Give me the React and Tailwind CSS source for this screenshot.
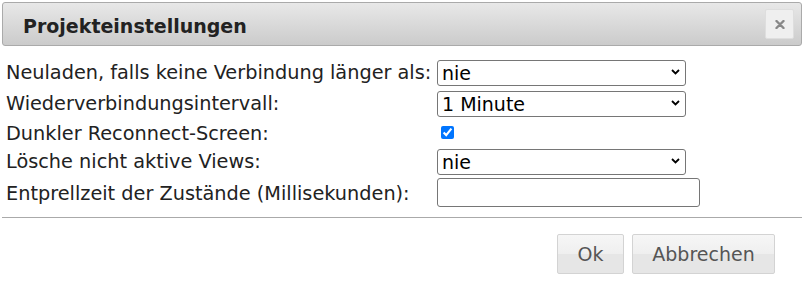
import { useState } from 'react';

const SelectBox = ({ value, options, className }) => {
  const [current, setCurrent] = useState(value);
  return (
    <div className={`relative w-[249px] h-[26px] ${className || ''}`}>
      <select
        value={current}
        onChange={(e) => setCurrent(e.target.value)}
        className="appearance-none w-full h-full border border-[#767676] rounded-[3px] bg-white pl-[4px] pr-[24px] text-[19px] leading-[22px] text-black outline-none"
      >
        {options.map((o) => (
          <option key={o} value={o}>{o}</option>
        ))}
      </select>
      {/* chevron */}
      <svg
        className="absolute right-[6px] top-[10px] pointer-events-none"
        width="9"
        height="6"
        viewBox="0 0 9 6"
      >
        <path d="M1 1 L4.5 4.5 L8 1" fill="none" stroke="#000" strokeWidth="1.8" />
      </svg>
    </div>
  );
};

const Row = ({ label, height, children }) => (
  <div className={`flex items-center ${height}`}>
    <div className="w-[431px] shrink-0 pt-[3px] text-[19.3px] text-[#222] whitespace-nowrap">{label}</div>
    <div className="flex items-center">{children}</div>
  </div>
);

const App = () => {
  const [dark, setDark] = useState(true);

  return (
    <div className="w-[806px] h-[297px] bg-white overflow-hidden font-['DejaVu_Sans',sans-serif] text-[19px]">
      {/* Title bar */}
      <div className="ml-[2px] mt-[2px] w-[800px] h-[44px] border border-[#aaa] rounded-[3px] bg-[linear-gradient(to_bottom,#e8e8e8,#cbcbcb)] flex items-center justify-between pl-[20px] pr-[7px]">
        <span className="font-bold text-[#222] pt-[4px]">Projekteinstellungen</span>
        <button className="w-[29px] h-[30px] border border-[#dedede] rounded-[2px] bg-[#efefef] flex items-center justify-center">
          <svg width="10" height="9" viewBox="0 0 10 9">
            <path d="M1.5 1 L8.5 8 M8.5 1 L1.5 8" stroke="#888" strokeWidth="2.4" strokeLinecap="round" />
          </svg>
        </button>
      </div>

      {/* Settings */}
      <div className="pl-[6px] pt-[11px]">
        <Row label="Neuladen, falls keine Verbindung länger als:" height="h-[30px]">
          <SelectBox value="nie" options={['nie', '1 Minute', '5 Minuten', '10 Minuten']} />
        </Row>
        <Row label="Wiederverbindungsintervall:" height="h-[31px] pt-[1px]">
          <SelectBox value="1 Minute" options={['5 Sekunden', '30 Sekunden', '1 Minute', '5 Minuten']} />
        </Row>
        <Row label="Dunkler Reconnect-Screen:" height="h-[29px]">
          <input
            type="checkbox"
            checked={dark}
            onChange={(e) => setDark(e.target.checked)}
            className="ml-[4px] w-[13px] h-[13px] accent-[#0075ff]"
          />
        </Row>
        <Row label="Lösche nicht aktive Views:" height="h-[28px]">
          <SelectBox value="nie" options={['nie', '1 Stunde', '1 Tag']} />
        </Row>
        <Row label="Entprellzeit der Zustände (Millisekunden):" height="h-[35px]">
          <input
            type="text"
            className="w-[263px] h-[29px] border border-[#767676] rounded-[3px] bg-white px-[4px] outline-none"
          />
        </Row>
      </div>

      {/* Divider */}
      <div className="ml-[2px] mt-[7px] w-[800px] border-t border-[#aaa]" />

      {/* Buttons */}
      <div className="w-[802px] flex justify-end gap-[8px] pt-[16px] pr-[27px]">
        <button className="w-[67px] h-[40px] border border-[#d3d3d3] rounded-[2px] bg-[linear-gradient(to_bottom,#f6f6f6_0%,#efefef_50%,#e6e6e6_50%,#e6e6e6_100%)] text-[#555]">
          Ok
        </button>
        <button className="w-[143px] h-[40px] border border-[#d3d3d3] rounded-[2px] bg-[linear-gradient(to_bottom,#f6f6f6_0%,#efefef_50%,#e6e6e6_50%,#e6e6e6_100%)] text-[#555]">
          Abbrechen
        </button>
      </div>
    </div>
  );
};

export default App;
